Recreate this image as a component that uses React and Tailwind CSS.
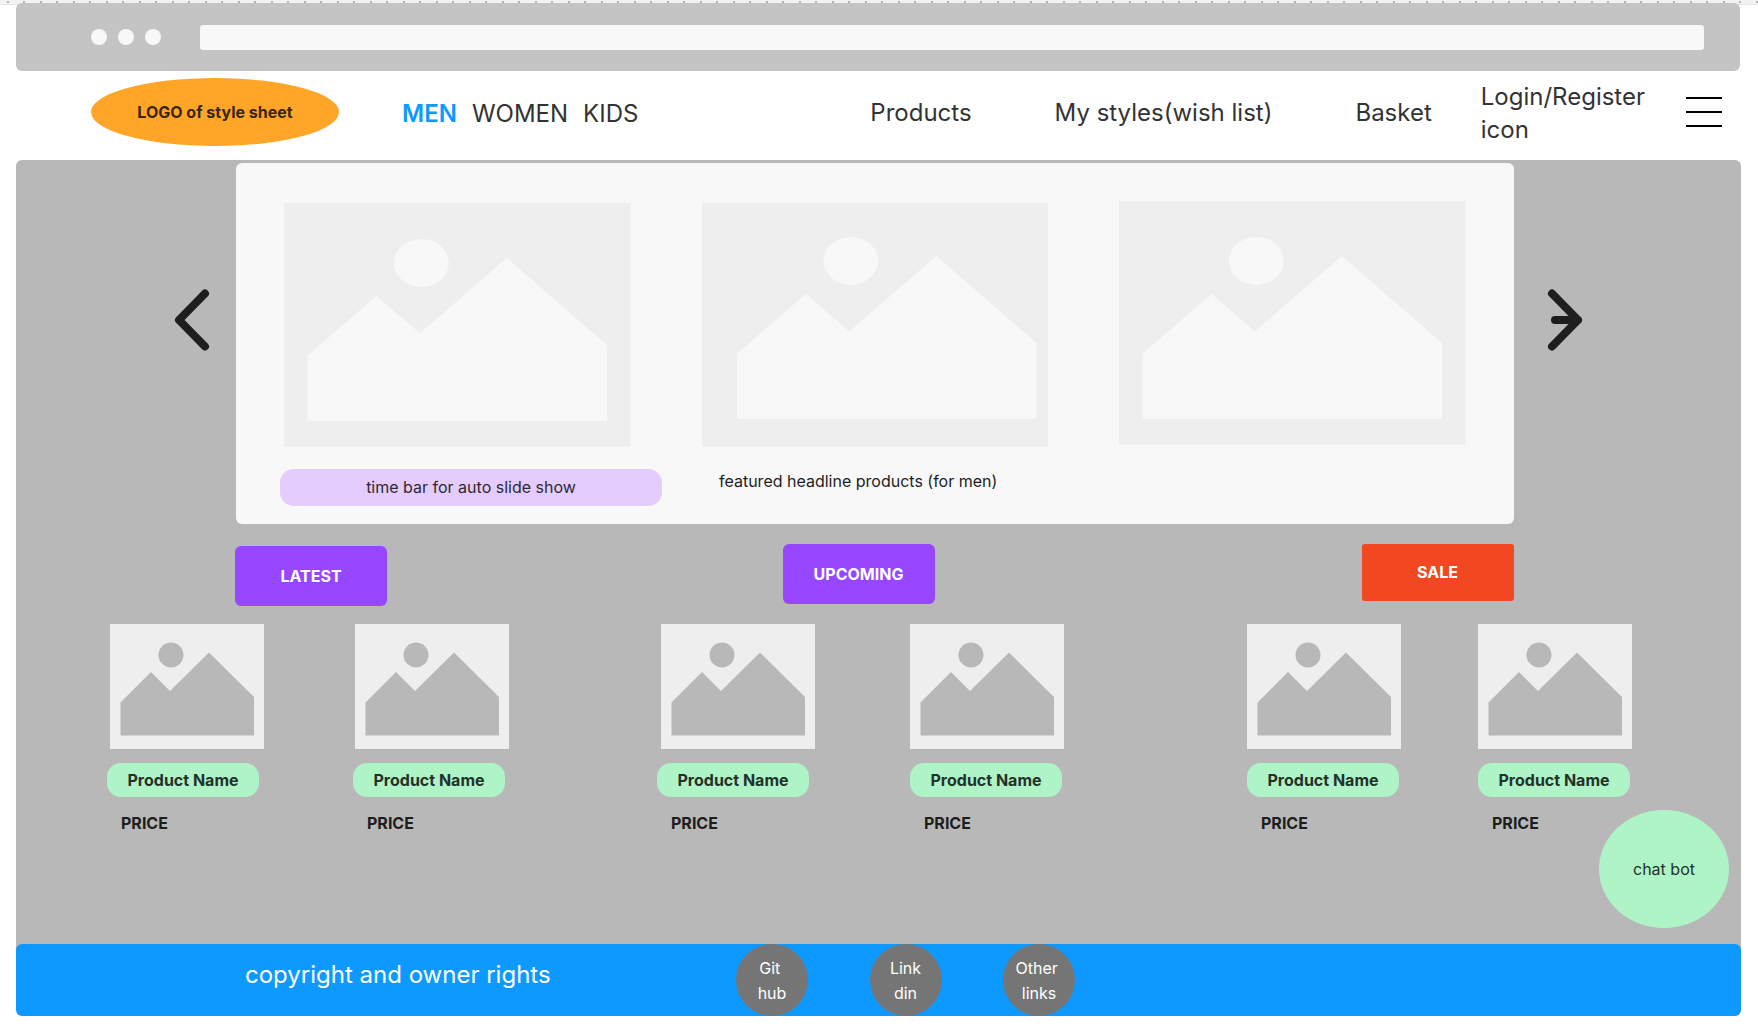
function Picture({ className, back, front, viewBox, sun, hills }) {
  return (
    <svg viewBox={viewBox} className={className} role="img" aria-label="Product picture">
      <rect width="100%" height="100%" className={back} />
      <ellipse {...sun} className={front} />
      <path d={hills} className={front} />
    </svg>
  );
}

const SLIDES = [
  {
    id: 1,
    offset: "pt-0.5",
    sun: { cx: 137.5, cy: 60, rx: 27.5, ry: 24 },
    hills: "M23.5 153 L92.5 93 L136 130.5 L223 55 L323.5 142.5 V218 H23.5 Z",
  },
  {
    id: 2,
    offset: "pt-0.5",
    sun: { cx: 149, cy: 58, rx: 27.5, ry: 24 },
    hills: "M35 151 L104 91 L147.5 128.5 L234.5 53 L335 140.5 V216 H35 Z",
  },
  {
    id: 3,
    offset: "pt-0",
    sun: { cx: 137.5, cy: 60, rx: 27.5, ry: 24 },
    hills: "M23.5 153 L92.5 93 L136 130.5 L223 55 L323.5 142.5 V218 H23.5 Z",
  },
];

const SECTIONS = [
  {
    name: "LATEST",
    column: "col-start-2",
    head: "pt-0.5 pl-1.5",
    button: "h-15 rounded-md bg-[#9747ff]",
    cards: ["ml-[3px]", "ml-0.5"],
  },
  {
    name: "UPCOMING",
    column: "col-start-4",
    head: "pr-1",
    button: "h-15 rounded-md bg-[#9747ff]",
    cards: ["ml-1", "ml-0"],
  },
  {
    name: "SALE",
    column: "col-start-6",
    head: "pr-1",
    button: "h-[57px] rounded-[3px] bg-[#f24822]",
    cards: ["ml-0", "ml-0"],
  },
];

function ProductCard({ indent }) {
  return (
    <article className="flex flex-col items-start">
      <div className={indent}>
        <Picture
          className="block w-[154px]"
          viewBox="0 0 154 125"
          back="fill-[#eeeeee]"
          front="fill-[#b8b8b8]"
          sun={{ cx: 61, cy: 31, rx: 12.5, ry: 12.5 }}
          hills="M10.5 78.5 L41 48 L60 67 L99 28.5 L144 73 V111.5 H10.5 Z"
        />
      </div>
      <h3 className="mt-3.5 flex h-[34px] w-[152px] items-center justify-center rounded-[14px] bg-[#aff4c6] text-base font-bold text-[#23312a]">
        Product Name
      </h3>
      <p className="mt-3.5 ml-3.5 text-base leading-6 font-bold text-[#1e1e1e]">PRICE</p>
    </article>
  );
}

function Section({ section }) {
  return (
    <section className={`row-start-1 ${section.column}`} aria-label={section.name}>
      <div className={`flex h-20 items-start justify-center ${section.head}`}>
        <button
          type="button"
          className={`w-[152px] text-base font-bold text-white ${section.button}`}
        >
          {section.name}
        </button>
      </div>
      <div className="flex justify-between">
        {section.cards.map((indent, i) => (
          <ProductCard key={i} indent={indent} />
        ))}
      </div>
    </section>
  );
}

function RoundLink({ lines }) {
  return (
    <a
      href="#"
      className="flex size-[72px] flex-col items-center justify-center rounded-full bg-[#757575] pt-0.5 text-base leading-[25px] whitespace-pre text-white"
    >
      {lines.map((line) => (
        <span key={line}>{line}</span>
      ))}
    </a>
  );
}

export default function App() {
  return (
    <div className="min-h-screen bg-white font-['Inter',sans-serif] text-[#333333]">
      <div className="h-[5px] border-b border-[#e8e8e8] bg-[#f2f2f2] bg-[radial-gradient(circle_at_8px_2px,#b3b3b3_1px,transparent_1px),radial-gradient(circle_at_24px_2px,#b3b3b3_1px,transparent_1px)] bg-[length:33px_5px]" />

      <div className="mr-[18px] ml-4 -mt-0.5 flex h-17 items-center rounded-md bg-[#c4c4c4] pr-9 pl-[75px]">
        <div className="flex gap-[11px]">
          <span className="size-4 rounded-full bg-[#f8f8f8]" />
          <span className="size-4 rounded-full bg-[#f8f8f8]" />
          <span className="size-4 rounded-full bg-[#f8f8f8]" />
        </div>
        <input
          type="text"
          aria-label="Address"
          className="ml-[39px] h-[25px] flex-1 rounded-[3px] bg-[#f8f8f8] px-2 outline-none"
        />
      </div>

      <header className="flex h-[89px] items-center pr-9 pb-2 pl-[91px] text-2xl leading-[33px]">
        <a
          href="#"
          className="flex h-17 w-[248px] shrink-0 items-center justify-center rounded-[50%] bg-[#ffa629] text-base font-bold text-[#3a2610]"
        >
          LOGO of style sheet
        </a>
        <nav aria-label="Departments" className="ml-[63px] flex gap-[15px] pt-1">
          <a href="#" className="font-semibold text-[#0d99ff]">MEN</a>
          <a href="#">WOMEN</a>
          <a href="#">KIDS</a>
        </nav>
        <nav aria-label="Account" className="ml-auto flex items-center pt-0.5">
          <a href="#" className="mr-[83px]">Products</a>
          <a href="#" className="mr-[83px]">My styles(wish list)</a>
          <a href="#" className="mr-[49px]">Basket</a>
          <a href="#" className="mr-[41px]">
            Login/Register
            <br />
            icon
          </a>
          <button type="button" aria-label="Menu">
            <svg viewBox="0 0 36 32" className="block h-8 w-9 stroke-black stroke-2">
              <path d="M0 1H36M0 15H36M0 29H36" />
            </svg>
          </button>
        </nav>
      </header>

      <main className="relative mr-[17px] ml-4 rounded-t-md bg-[#b8b8b8] pt-[3px]">
        <div className="grid grid-cols-[220fr_1278fr_227fr]">
          <button
            type="button"
            aria-label="Previous"
            className="mt-[126px] mr-[26px] self-start justify-self-end"
          >
            <svg
              viewBox="0 0 36 62"
              className="block h-[62px] w-9 fill-none stroke-[#1e1e1e] stroke-[8]"
              strokeLinecap="round"
              strokeLinejoin="round"
            >
              <path d="M31 4.5 L5 31 L31 57.5" />
            </svg>
          </button>

          <section aria-label="Featured" className="rounded-md bg-[#f8f8f8] pt-[38px] pb-[18px]">
            <div className="grid grid-cols-3 items-start gap-[71px] px-12">
              {SLIDES.map((slide) => (
                <div key={slide.id} className={slide.offset}>
                  <Picture
                    className="block w-full"
                    viewBox="0 0 347 244"
                    back="fill-[#eeeeee]"
                    front="fill-[#f8f8f8]"
                    sun={slide.sun}
                    hills={slide.hills}
                  />
                </div>
              ))}
            </div>
            <div className="mt-[22px] flex items-start px-11">
              <p className="flex h-[37px] w-[382px] items-center justify-center rounded-[14px] bg-[#e4ccff] text-base text-[#2e2933]">
                time bar for auto slide show
              </p>
              <p className="ml-[57px] text-base text-[#1e1e1e]">featured headline products (for men)</p>
            </div>
          </section>

          <button
            type="button"
            aria-label="Next"
            className="mt-[126px] ml-[33px] self-start justify-self-start"
          >
            <svg
              viewBox="0 0 36 62"
              className="block h-[62px] w-9 fill-none stroke-[#1e1e1e] stroke-[8]"
              strokeLinecap="round"
              strokeLinejoin="round"
            >
              <path d="M5 4.5 L31 31 L5 57.5 M8 31 H31" />
            </svg>
          </button>
        </div>

        <div className="mt-5 grid grid-cols-[91fr_402fr_148fr_407fr_183fr_385fr_109fr] pb-[109px]">
          {SECTIONS.map((section) => (
            <Section key={section.name} section={section} />
          ))}
        </div>

        <button
          type="button"
          className="absolute right-3 bottom-4 h-[118px] w-[130px] rounded-[50%] bg-[#aff4c6] text-base text-[#23312a]"
        >
          chat bot
        </button>
      </main>

      <div className="mr-[17px] ml-4 bg-[linear-gradient(#b8b8b8_12px,transparent_12px)]">
        <footer className="grid h-18 grid-cols-[229fr_491fr_339fr_666fr] rounded-md bg-[#0d99ff]">
          <p className="col-start-2 pt-3.5 text-2xl leading-[33px] text-white">
            copyright and owner rights
          </p>
          <nav aria-label="Links" className="col-start-3 flex items-start justify-between">
            <RoundLink lines={["Git ", "hub"]} />
            <RoundLink lines={["Link", "din"]} />
            <RoundLink lines={["Other ", "links"]} />
          </nav>
        </footer>
      </div>
    </div>
  );
}
